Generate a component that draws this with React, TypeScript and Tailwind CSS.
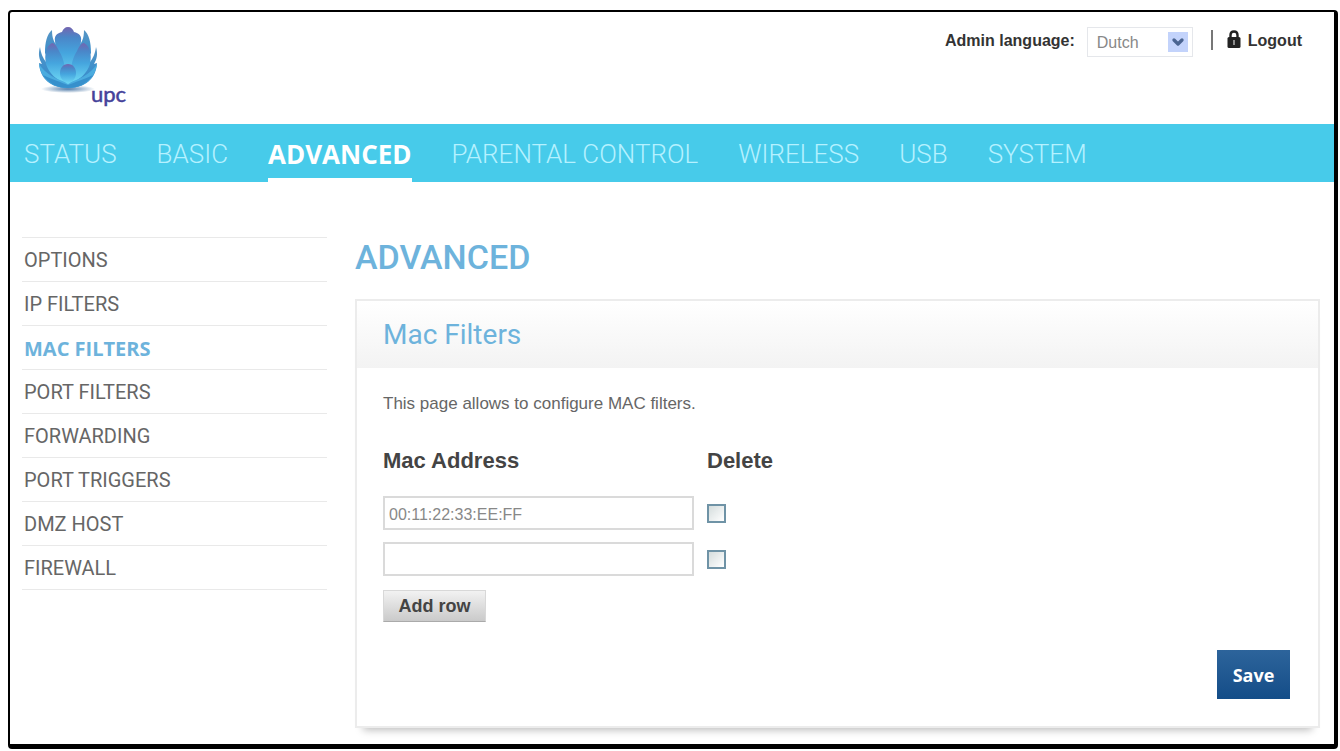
import { useState } from "react";
import { ChevronDown } from "lucide-react";

const tabs = ["STATUS", "BASIC", "ADVANCED", "PARENTAL CONTROL", "WIRELESS", "USB", "SYSTEM"];

const menuItems = [
  "OPTIONS",
  "IP FILTERS",
  "MAC FILTERS",
  "PORT FILTERS",
  "FORWARDING",
  "PORT TRIGGERS",
  "DMZ HOST",
  "FIREWALL",
];

type Row = { id: number; mac: string; remove: boolean };

function Logo() {
  return (
    <svg width="92" height="84" viewBox="0 0 92 84" role="img" aria-label="upc">
      <defs>
        <linearGradient id="petal" x1="0" y1="0" x2="0" y2="1">
          <stop offset="0" stopColor="#7465b0" />
          <stop offset="0.2" stopColor="#4a86c8" />
          <stop offset="0.5" stopColor="#45a5de" />
          <stop offset="1" stopColor="#6fdaf5" />
        </linearGradient>
        <linearGradient id="outer" x1="0" y1="0" x2="0" y2="1">
          <stop offset="0" stopColor="#5795c4" />
          <stop offset="0.5" stopColor="#3f8fcb" />
          <stop offset="1" stopColor="#3a8ecb" />
        </linearGradient>
        <radialGradient id="shade">
          <stop offset="0" stopColor="#2b5f96" stopOpacity="0.8" />
          <stop offset="1" stopColor="#2b5f96" stopOpacity="0" />
        </radialGradient>
      </defs>
      <ellipse cx="32" cy="63" rx="27" ry="4" fill="url(#shade)" />
      {/* outer petals */}
      <path d="M4 21C2 28 3 33 6 38L3 37C4 53 15 62 32 62S60 53 61 37L58 38C61 33 62 28 60 21C59 28 57 32 54 36L43 50H21L10 36C7 32 5 28 4 21Z" fill="url(#outer)" />
      <path d="M16 4C11 8 9 16 9 27L21 44L24 22C18 18 16 12 16 4Z" fill="url(#outer)" />
      <path d="M48 4C53 8 55 16 55 27L43 44L40 22C46 18 48 12 48 4Z" fill="url(#outer)" />
      {/* centre petal */}
      <path d="M32 1C35 1 37 3 38 6C43 7 46 10 45 15C44 27 40 41 32 53C24 41 20 27 19 15C18 10 21 7 26 6C27 3 29 1 32 1Z" fill="url(#petal)" />
      {/* inner side petals */}
      <path d="M16 17C10 20 8 29 10 38C13 48 21 54 29 57C30 46 29 34 23 25C21 20 18 17 16 17Z" fill="url(#petal)" />
      <path d="M48 17C54 20 56 29 54 38C51 48 43 54 35 57C34 46 35 34 41 25C43 20 46 17 48 17Z" fill="url(#petal)" />
      {/* lower fold */}
      <path d="M3 38C10 49 21 53 32 57C43 53 54 49 61 38C59 53 48 62 32 62S5 53 3 38Z" fill="#4bacdf" />
      <path d="M7 49C17 54 25 56 32 59C39 56 47 54 57 49C51 58 42 62 32 62S13 58 7 49Z" fill="#3790cc" />
      <path d="M32 38C27 38 24 42 24 47C24 53 28 56 32 58C36 56 40 53 40 47C40 42 37 38 32 38Z" fill="url(#petal)" />
      <text x="55" y="76" fill="#45429a" stroke="#45429a" strokeWidth="0.500" fontFamily="Lato, sans-serif" fontSize="22">
        upc
      </text>
    </svg>
  );
}

function LockIcon() {
  return (
    <svg width="14" height="18" viewBox="0 0 14 18" aria-hidden="true">
      <path d="M3.500 8V5C3.500 3 5 1.500 7 1.500S10.500 3 10.500 5V8" fill="none" stroke="#222" strokeWidth="2.400" />
      <rect x="0.500" y="7" width="13" height="11" rx="1.500" fill="#222" />
      <path d="M7 10V15" stroke="#999" strokeWidth="1.800" />
    </svg>
  );
}

export default function App() {
  const [language, setLanguage] = useState("Dutch");
  const [rows, setRows] = useState<Row[]>([
    { id: 1, mac: "00:11:22:33:EE:FF", remove: false },
    { id: 2, mac: "", remove: false },
  ]);

  const updateRow = (id: number, change: Partial<Row>) => {
    setRows(prev => prev.map(row => (row.id === id ? { ...row, ...change } : row)));
  };

  const addRow = () => {
    setRows(prev => [...prev, { id: prev.length + 1, mac: "", remove: false }]);
  };

  return (
    <div className="bg-white pt-[10px] pl-2 pr-[2px] pb-px font-['Liberation_Sans',Arial,sans-serif]">
      <div className="border-2 border-r-4 border-b-[5px] border-black rounded-sm pb-4">
        <header className="flex justify-between h-28 pt-[14px] pl-[26px] pr-8">
          <Logo />
          <div className="flex items-start text-base text-[#333]">
            <label htmlFor="language" className="font-bold leading-[30px]">
              Admin language:
            </label>
            <div className="relative ml-3 mt-px">
              <select
                id="language"
                value={language}
                onChange={(e) => setLanguage(e.target.value)}
                className="appearance-none w-[106px] h-[30px] pl-[9px] pt-[2px] border border-gray-200 bg-white text-[#888]"
              >
                <option>Dutch</option>
                <option>English</option>
              </select>
              <span className="absolute right-[5px] top-[5px] flex items-center justify-center size-5 bg-[#c3d3fb] pointer-events-none">
                <ChevronDown size={16} strokeWidth={5} className="text-[#4a6491]" />
              </span>
            </div>
            <span className="ml-[18px] mt-1 w-[2px] h-5 bg-[#777]" />
            <a href="#logout" className="flex items-start gap-[7px] ml-[14px] font-bold leading-[30px]">
              <span className="mt-1">
                <LockIcon />
              </span>
              Logout
            </a>
          </div>
        </header>

        <nav className="flex gap-10 h-[58px] pl-[14px] bg-[#47cbea] text-[26px]">
          {tabs.map((tab) => (
            <a
              key={tab}
              href="#"
              className={`flex items-center pt-[6px] border-b-4 ${
                tab === "ADVANCED"
                  ? "font-['Open_Sans',sans-serif] font-bold text-white border-white"
                  : "font-['Roboto',sans-serif] font-light text-[#b5f1ff] border-transparent"
              }`}
            >
              {tab}
            </a>
          ))}
        </nav>

        <div className="flex items-start gap-7 pt-[55px] pl-3 pr-[14px]">
          <ul className="w-[305px] shrink-0 border-t border-[#e9e9e9] text-xl">
            {menuItems.map((item) => (
              <li key={item} className="h-11 border-b border-[#e9e9e9]">
                <a
                  href="#"
                  className={`block pl-[2px] leading-[45px] ${
                    item === "MAC FILTERS"
                      ? "font-['Open_Sans',sans-serif] font-bold text-[#6db3dc]"
                      : "font-['Roboto',sans-serif] text-[#666]"
                  }`}
                >
                  {item}
                </a>
              </li>
            ))}
          </ul>

          <main className="flex-1">
            <h1 className="font-['Roboto',sans-serif] font-medium text-[34px] leading-10 text-[#6db3dc]">ADVANCED</h1>

            <section className="mt-[22px] border-2 border-[#ececec] bg-white shadow-[0_10px_8px_-8px_#bbbbbb]">
              <h2 className="pl-[26px] h-[67px] leading-[67px] bg-linear-to-b from-white to-[#f3f3f3] font-['Roboto',sans-serif] text-[28px] text-[#6db3dc]">
                Mac Filters
              </h2>
              <div className="pl-[26px] pr-7 pt-6 pb-[27px]">
                <p className="text-[17px] leading-6 text-[#666]">This page allows to configure MAC filters.</p>
                <table className="mt-6">
                  <thead>
                    <tr className="text-left text-[22px] leading-[42px] text-[#444]">
                      <th className="w-[324px] pb-2">Mac Address</th>
                      <th className="pb-2">Delete</th>
                    </tr>
                  </thead>
                  <tbody>
                    {rows.map((row) => (
                      <tr key={row.id} className="h-[46px]">
                        <td>
                          <input
                            type="text"
                            aria-label={`Mac address ${row.id}`}
                            value={row.mac}
                            onChange={(e) => updateRow(row.id, { mac: e.target.value })}
                            className="block w-[311px] h-[34px] px-1 pt-1 border-2 border-[#dadada] text-base text-[#888]"
                          />
                        </td>
                        <td>
                          <input
                            type="checkbox"
                            aria-label={`Delete row ${row.id}`}
                            checked={row.remove}
                            onChange={(e) => updateRow(row.id, { remove: e.target.checked })}
                            className="block appearance-none size-[19px] border-2 border-[#6f93a6] bg-linear-to-br from-[#d5dddd] to-white checked:bg-[#527990]"
                          />
                        </td>
                      </tr>
                    ))}
                  </tbody>
                </table>
                <button
                  onClick={addRow}
                  className="block mt-2 w-[103px] h-8 border border-[#d8d8d8] border-b-[#aaa] bg-linear-to-b from-[#f2f2f2] to-[#cacaca] text-lg font-bold text-[#444]"
                >
                  Add row
                </button>
                <button className="block ml-auto mt-7 w-[73px] h-[49px] bg-linear-to-b from-[#2d649b] to-[#134d88] font-['Open_Sans',sans-serif] text-lg font-bold text-white">
                  Save
                </button>
              </div>
            </section>
          </main>
        </div>
      </div>
    </div>
  );
}
